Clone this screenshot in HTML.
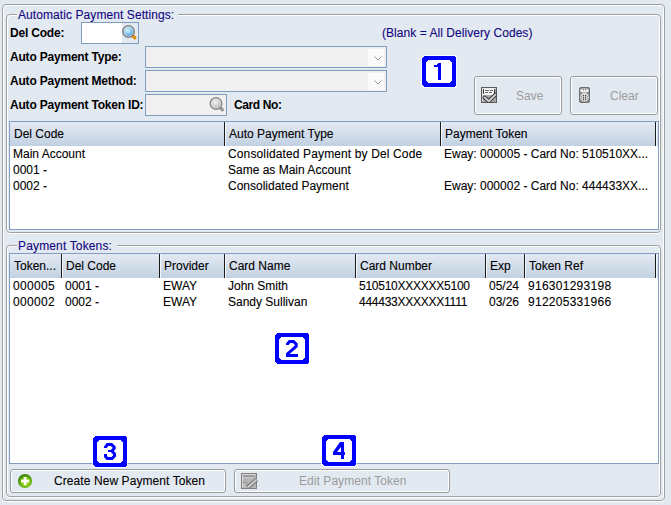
<!DOCTYPE html>
<html><head><meta charset="utf-8">
<style>
*{box-sizing:border-box;margin:0;padding:0}
html,body{width:671px;height:505px;overflow:hidden;background:#e3e9f1}
body{position:relative;font-family:"Liberation Sans",sans-serif;font-size:12px;color:#000}
.a{position:absolute}
.t{position:absolute;white-space:pre;line-height:14px;font-size:12px;-webkit-text-stroke:0.1px currentColor}
.b{font-weight:bold;font-size:12px;letter-spacing:-0.2px;-webkit-text-stroke:0}
.cap{color:#110780}
.frame{position:absolute;border:1px solid #a0a0a0;border-radius:4px;box-shadow:inset 1px 1px 0 #fff,inset -1px 0 0 #fff,0 1px 0 #fff}
.inp{position:absolute;border:1px solid #7f9dbf;background:#f0f0f0}
.grid{position:absolute;border:1px solid #7f9ec2;background:#fff}
.hdr{position:absolute;left:0;top:0;right:0;height:24px;background:linear-gradient(#e4e9f2,#c1d1e2)}
.sep{position:absolute;top:0;width:2px;height:24px;border-left:1px solid #1a1a1a;border-right:1px solid #f4f7fb}
.btn{position:absolute;border:1px solid #9a9a9a;border-radius:3px;box-shadow:inset 0 0 0 1px #fff}
.dis{color:#9c9c9c;-webkit-text-stroke:0}
.num{position:absolute;width:34px;height:31px;background:#00f;clip-path:polygon(2px 0,32px 0,34px 2px,34px 29px,32px 31px,2px 31px,0 29px,0 2px);outline:1px solid #fff}
.num i{position:absolute;left:4px;top:4px;width:26px;height:23px;background:#fff;clip-path:polygon(3px 0,23px 0,26px 3px,26px 20px,23px 23px,3px 23px,0 20px,0 3px)}
.num b{position:absolute;left:0;top:4px;width:34px;text-align:center;font-size:23px;line-height:23px;color:#00f;font-weight:bold}
</style></head><body>

<!-- outer frame -->
<div class="frame" style="left:2px;top:4px;width:663px;height:497px"></div>

<!-- group 1 -->
<div class="frame" style="left:6px;top:14px;width:655px;height:219px"></div>
<div class="a" style="left:17px;top:8px;width:161px;height:12px;background:#e3e9f1"></div>
<div class="t cap" style="left:18px;top:8px;letter-spacing:0.08px">Automatic Payment Settings:</div>

<div class="t b" style="left:10px;top:26px">Del Code:</div>
<div class="inp" style="left:81px;top:22px;width:58px;height:22px;background:#e3e9f1"><div class="a" style="left:0;top:0;width:40px;height:20px;background:#fff"></div></div>
<svg class="a" style="left:121px;top:24px" width="17" height="17" viewBox="0 0 17 17">
 <defs><radialGradient id="mg" cx="0.4" cy="0.35" r="0.7"><stop offset="0" stop-color="#d8f2ff"/><stop offset="0.6" stop-color="#8ccbf2"/><stop offset="1" stop-color="#3d8fd8"/></radialGradient></defs>
 <path d="M12 12 L13.8 13.8" stroke="#e0900f" stroke-width="3.4" stroke-linecap="round"/>
 <circle cx="7.5" cy="7.5" r="5.7" fill="#fff" stroke="#808080" stroke-width="1.6"/>
 <circle cx="7.5" cy="7.5" r="4.4" fill="url(#mg)"/>
</svg>
<div class="t cap" style="left:382px;top:26px;letter-spacing:0.05px">(Blank = All Delivery Codes)</div>

<div class="t b" style="left:10px;top:50px">Auto Payment Type:</div>
<div class="inp" style="left:145px;top:46px;width:242px;height:22px"><div class="a" style="left:222px;top:2px;width:16px;height:17px;background:#fbfbfb"></div></div>
<svg class="a" style="left:373px;top:56px" width="10" height="6" viewBox="0 0 10 6"><path d="M1.5 0.5 L5 4 L8.5 0.5" fill="none" stroke="#999" stroke-width="1"/></svg>

<div class="t b" style="left:10px;top:74px">Auto Payment Method:</div>
<div class="inp" style="left:145px;top:70px;width:242px;height:22px"><div class="a" style="left:222px;top:2px;width:16px;height:17px;background:#fbfbfb"></div></div>
<svg class="a" style="left:373px;top:80px" width="10" height="6" viewBox="0 0 10 6"><path d="M1.5 0.5 L5 4 L8.5 0.5" fill="none" stroke="#999" stroke-width="1"/></svg>

<div class="t b" style="left:10px;top:98px">Auto Payment Token ID:</div>
<div class="inp" style="left:145px;top:94px;width:82px;height:22px"></div>
<svg class="a" style="left:208px;top:96px" width="17" height="17" viewBox="0 0 17 17">
 <defs><radialGradient id="mg2" cx="0.4" cy="0.35" r="0.7"><stop offset="0" stop-color="#f4f4f4"/><stop offset="1" stop-color="#b8b8b8"/></radialGradient></defs>
 <path d="M12.5 12 L14.3 13.8" stroke="#9a9a9a" stroke-width="3.4" stroke-linecap="round"/>
 <circle cx="8" cy="7.5" r="5.7" fill="#fff" stroke="#888" stroke-width="1.6"/>
 <circle cx="8" cy="7.5" r="4.4" fill="url(#mg2)"/>
</svg>
<div class="t b" style="left:234px;top:98px;letter-spacing:-0.38px">Card No:</div>

<!-- Save / Clear -->
<div class="btn" style="left:474px;top:76px;width:88px;height:39px"></div>
<svg class="a" style="left:481px;top:87px" width="16" height="16" viewBox="0 0 16 16">
 <rect x="0.5" y="0.5" width="15" height="15" fill="#a9a9a9" stroke="#5a5a5a"/>
 <path d="M1.5 14.5V1.5H14.5" fill="none" stroke="#e0e0e0"/>
 <rect x="2" y="1.5" width="12" height="6.5" fill="#f8f8f8"/>
 <path d="M2.5 2.2v4.6M13.5 2.2v4.6" stroke="#333"/>
 <path d="M4 3.5h4M9 3.5h3M4 5.5h3M8 5.5h3" stroke="#666" stroke-width="1"/>
 <path d="M3.6 10.6 L7.8 14.2 L14.4 7.6" fill="none" stroke="#3a3a3a" stroke-width="4" stroke-linejoin="round" stroke-linecap="round"/>
 <path d="M3.6 10.6 L7.8 14.2 L14.4 7.6" fill="none" stroke="#cfcfcf" stroke-width="2" stroke-linejoin="round" stroke-linecap="round"/>
</svg>
<div class="t dis" style="left:516px;top:89px">Save</div>
<div class="btn" style="left:570px;top:76px;width:88px;height:39px"></div>
<svg class="a" style="left:579px;top:87px" width="11" height="16" viewBox="0 0 11 16">
 <rect x="0.5" y="0.5" width="10" height="15" rx="1.5" fill="#8a8a8a" stroke="#6e6e6e"/>
 <ellipse cx="5.5" cy="3.5" rx="4.3" ry="2.1" fill="#f2f2f2"/>
 <g fill="#6a6a6a"><circle cx="4.4" cy="2.8" r="0.7"/><circle cx="6.6" cy="2.8" r="0.7"/></g>
 <ellipse cx="5.5" cy="10.2" rx="4.4" ry="4.3" fill="#e4e4e4"/>
 <g fill="#4a4a4a"><circle cx="4.4" cy="8.6" r="0.8"/><circle cx="6.6" cy="8.6" r="0.8"/><circle cx="4.4" cy="10.6" r="0.8"/><circle cx="6.6" cy="10.6" r="0.8"/><circle cx="4.4" cy="12.6" r="0.8"/><circle cx="6.6" cy="12.6" r="0.8"/></g>
 <g fill="#9a9a9a"><circle cx="2.4" cy="9.5" r="0.7"/><circle cx="8.6" cy="9.5" r="0.7"/><circle cx="2.4" cy="11.5" r="0.7"/><circle cx="8.6" cy="11.5" r="0.7"/></g>
</svg>
<div class="t dis" style="left:610px;top:89px">Clear</div>

<!-- grid 1 -->
<div class="grid" style="left:9px;top:121px;width:650px;height:109px">
 <div class="hdr"></div>
 <div class="sep" style="left:214px"></div>
 <div class="sep" style="left:430px"></div>
 <div class="sep" style="left:645px"></div>
</div>
<div class="t" style="left:14px;top:127px">Del Code</div>
<div class="t" style="left:229px;top:127px">Auto Payment Type</div>
<div class="t" style="left:445px;top:127px">Payment Token</div>
<div class="t" style="left:13px;top:147px">Main Account</div>
<div class="t" style="left:13px;top:163px">0001 -</div>
<div class="t" style="left:13px;top:179px">0002 -</div>
<div class="t" style="left:228px;top:147px;letter-spacing:0.13px">Consolidated Payment by Del Code</div>
<div class="t" style="left:228px;top:163px">Same as Main Account</div>
<div class="t" style="left:228px;top:179px">Consolidated Payment</div>
<div class="t" style="left:444px;top:147px">Eway: 000005 - Card No: 510510XX...</div>
<div class="t" style="left:444px;top:179px">Eway: 000002 - Card No: 444433XX...</div>

<!-- group 2 -->
<div class="frame" style="left:6px;top:245px;width:655px;height:252px"></div>
<div class="a" style="left:17px;top:239px;width:100px;height:12px;background:#e3e9f1"></div>
<div class="t cap" style="left:18px;top:239px;letter-spacing:0.15px">Payment Tokens:</div>

<div class="grid" style="left:9px;top:253px;width:650px;height:211px">
 <div class="hdr"></div>
 <div class="sep" style="left:51px"></div>
 <div class="sep" style="left:149px"></div>
 <div class="sep" style="left:214px"></div>
 <div class="sep" style="left:345px"></div>
 <div class="sep" style="left:475px"></div>
 <div class="sep" style="left:514px"></div>
 <div class="sep" style="left:645px"></div>
</div>
<div class="t" style="left:14px;top:259px">Token...</div>
<div class="t" style="left:66px;top:259px">Del Code</div>
<div class="t" style="left:164px;top:259px">Provider</div>
<div class="t" style="left:229px;top:259px">Card Name</div>
<div class="t" style="left:360px;top:259px">Card Number</div>
<div class="t" style="left:490px;top:259px">Exp</div>
<div class="t" style="left:529px;top:259px">Token Ref</div>

<div class="t" style="left:13px;top:279px;letter-spacing:0.35px">000005</div>
<div class="t" style="left:65px;top:279px">0001 -</div>
<div class="t" style="left:163px;top:279px">EWAY</div>
<div class="t" style="left:228px;top:279px">John Smith</div>
<div class="t" style="left:359px;top:279px;letter-spacing:-0.25px">510510XXXXXX5100</div>
<div class="t" style="left:489px;top:279px">05/24</div>
<div class="t" style="left:528px;top:279px;letter-spacing:0.27px">916301293198</div>

<div class="t" style="left:13px;top:295px;letter-spacing:0.35px">000002</div>
<div class="t" style="left:65px;top:295px">0002 -</div>
<div class="t" style="left:163px;top:295px">EWAY</div>
<div class="t" style="left:228px;top:295px">Sandy Sullivan</div>
<div class="t" style="left:359px;top:295px;letter-spacing:-0.25px">444433XXXXXX1111</div>
<div class="t" style="left:489px;top:295px">03/26</div>
<div class="t" style="left:528px;top:295px;letter-spacing:0.27px">912205331966</div>

<!-- bottom buttons -->
<div class="btn" style="left:10px;top:469px;width:216px;height:24px"></div>
<svg class="a" style="left:17px;top:473px" width="16" height="16" viewBox="0 0 16 16">
 <defs><radialGradient id="gg" cx="0.55" cy="0.6" r="0.55"><stop offset="0" stop-color="#a8e02a"/><stop offset="0.6" stop-color="#78c010"/><stop offset="0.85" stop-color="#4f9c08"/><stop offset="1" stop-color="#3a7e06"/></radialGradient></defs>
 <circle cx="8" cy="8" r="7" fill="url(#gg)"/>
 <rect x="4" y="6.6" width="8.2" height="2.8" fill="#fff"/>
 <rect x="6.7" y="4" width="2.8" height="8.2" fill="#fff"/>
</svg>
<div class="t" style="left:54px;top:474px;letter-spacing:0.08px">Create New Payment Token</div>

<div class="btn" style="left:234px;top:469px;width:216px;height:24px"></div>
<svg class="a" style="left:241px;top:473px" width="18" height="16" viewBox="0 0 18 16">
 <rect x="0.5" y="0.5" width="15" height="15" fill="#b4b4b4" stroke="#808080"/>
 <path d="M1.5 14.5V1.5H14.5" fill="none" stroke="#dadada"/>
 <rect x="2" y="2" width="11" height="2.2" fill="#9a9a9a"/>
 <rect x="2" y="4.4" width="11" height="0.8" fill="#d6d6d6"/>
 <rect x="2" y="9" width="4" height="5" fill="#c8c8c8"/>
 <path d="M2 9.5h4v4.5M2.5 10L5.5 13.5" fill="none" stroke="#8a8a8a" stroke-width="0.8"/>
 <path d="M7 14.3 L15.6 6.6" stroke="#6e6e6e" stroke-width="4" stroke-linecap="butt"/>
 <path d="M7 14.3 L15.6 6.6" stroke="#d0d0d0" stroke-width="2" stroke-linecap="butt"/>
</svg>
<div class="t dis" style="left:299px;top:474px;letter-spacing:0.06px">Edit Payment Token</div>

<!-- numbered markers -->
<svg class="a" style="left:421px;top:55px" width="36" height="33" viewBox="0 0 36 33" shape-rendering="crispEdges">
 <polygon points="2,0 34,0 36,2 36,31 34,33 2,33 0,31 0,2" fill="#fff" fill-opacity="0.7"/>
 <polygon points="3,1 33,1 35,3 35,30 33,32 3,32 1,30 1,3" fill="#00f"/>
 <polygon points="7.2,5 28.8,5 31,7.2 31,25.8 28.8,28 7.2,28 5,25.8 5,7.2" fill="#fff"/>
 <g transform="translate(5,5)" fill="#00f"><rect x="12" y="3" width="3" height="17"/><rect x="8" y="5" width="4" height="2"/><rect x="11" y="4" width="1" height="1"/></g>
</svg>
<svg class="a" style="left:274px;top:332px" width="36" height="33" viewBox="0 0 36 33" shape-rendering="crispEdges">
 <polygon points="2,0 34,0 36,2 36,31 34,33 2,33 0,31 0,2" fill="#fff" fill-opacity="0.7"/>
 <polygon points="3,1 33,1 35,3 35,30 33,32 3,32 1,30 1,3" fill="#00f"/>
 <polygon points="7.2,5 28.8,5 31,7.2 31,25.8 28.8,28 7.2,28 5,25.8 5,7.2" fill="#fff"/>
 <g transform="translate(5,5)"><path d="M8.5,8 L8.5,7 L10.5,4.5 L14.5,4.5 L17.2,7.2 L17.2,9.3 L8.5,17 L8.5,18.5 L19,18.5" fill="none" stroke="#00f" stroke-width="3" stroke-linejoin="miter" shape-rendering="geometricPrecision"/></g>
</svg>
<svg class="a" style="left:92px;top:435px" width="36" height="33" viewBox="0 0 36 33" shape-rendering="crispEdges">
 <polygon points="2,0 34,0 36,2 36,31 34,33 2,33 0,31 0,2" fill="#fff" fill-opacity="0.7"/>
 <polygon points="3,1 33,1 35,3 35,30 33,32 3,32 1,30 1,3" fill="#00f"/>
 <polygon points="7.2,5 28.8,5 31,7.2 31,25.8 28.8,28 7.2,28 5,25.8 5,7.2" fill="#fff"/>
 <g transform="translate(5,5)"><path d="M8.5,8 L8.5,7 L10.5,4.5 L14.5,4.5 L17.2,7.2 L17.2,8.5 L15,10.7 M15,11.3 L17.5,13.8 L17.5,16 L15,18.5 L10.3,18.5 L8.5,16.5 L8.5,14" fill="none" stroke="#00f" stroke-width="3" stroke-linejoin="miter" shape-rendering="geometricPrecision"/><path d="M11,11 L15.5,11" stroke="#00f" stroke-width="2" shape-rendering="geometricPrecision"/></g>
</svg>
<svg class="a" style="left:321px;top:434px" width="36" height="33" viewBox="0 0 36 33" shape-rendering="crispEdges">
 <polygon points="2,0 34,0 36,2 36,31 34,33 2,33 0,31 0,2" fill="#fff" fill-opacity="0.7"/>
 <polygon points="3,1 33,1 35,3 35,30 33,32 3,32 1,30 1,3" fill="#00f"/>
 <polygon points="7.2,5 28.8,5 31,7.2 31,25.8 28.8,28 7.2,28 5,25.8 5,7.2" fill="#fff"/>
 <g transform="translate(5,5)"><path d="M14,3 L18,3 L18,13 L19,13 L19,16 L18,16 L18,20 L15,20 L15,16 L7,16 L7,13 Z M15,8 L15,13 L11,13 Z" fill="#00f" fill-rule="evenodd" shape-rendering="geometricPrecision"/></g>
</svg>

</body></html>
